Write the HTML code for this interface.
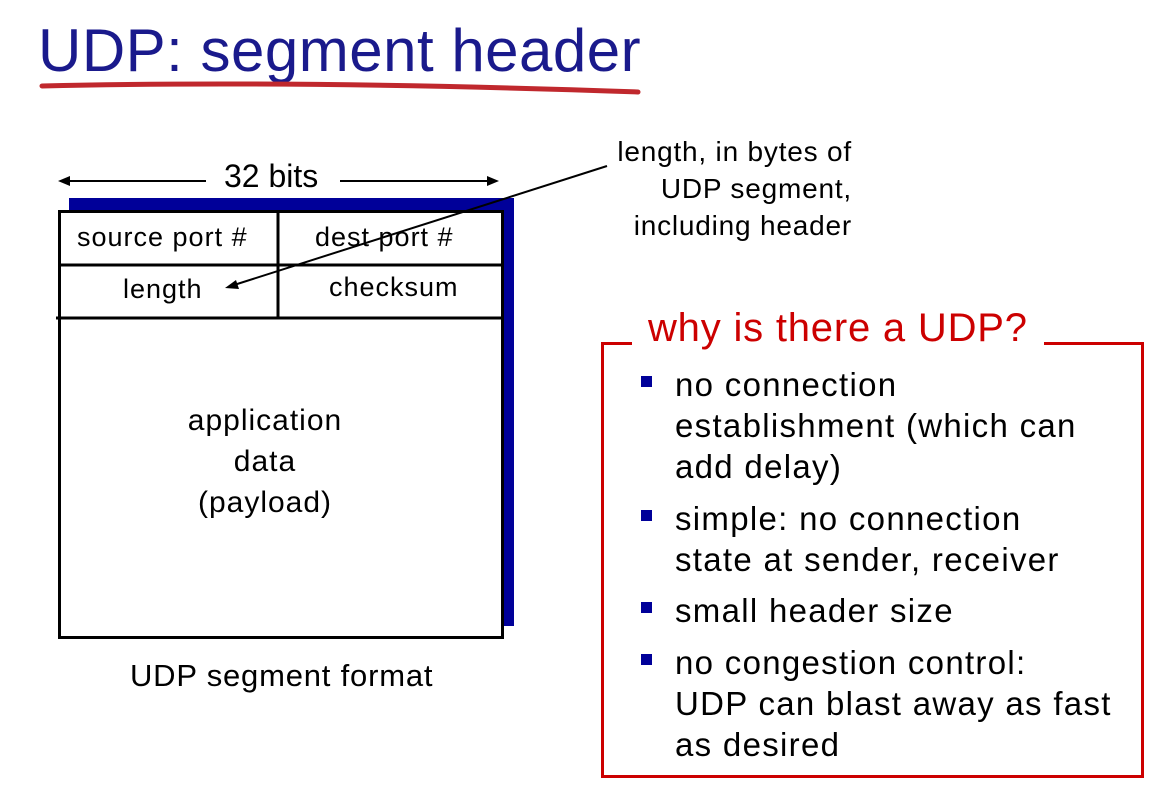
<!DOCTYPE html>
<html><head><meta charset="utf-8"><style>
body{margin:0;width:1167px;height:799px;background:#fff;position:relative;overflow:hidden;font-family:"Liberation Sans",sans-serif;color:#000}
.a{position:absolute;white-space:nowrap}
.d{font-size:27px;letter-spacing:1px}
.b{font-size:33px;line-height:41px;color:#000;letter-spacing:1.3px}
.sq{position:absolute;width:11px;height:11px;background:#000099}
</style></head><body>
<div class="a" style="left:38px;top:16px;font-size:60px;color:#1a1a8c;letter-spacing:0.5px">UDP: segment header</div>
<svg class="a" style="left:0;top:0" width="1167" height="799">
<path d="M42 86 Q300 80 638 92" stroke="#c0282d" stroke-width="5" fill="none" stroke-linecap="round"/>
<rect x="69" y="198" width="445" height="428" fill="#000099"/>
<rect x="59.5" y="211.5" width="443" height="426" fill="#fff" stroke="#000" stroke-width="3"/>
<line x1="59" y1="265" x2="503" y2="265" stroke="#000" stroke-width="3"/>
<line x1="56" y1="318" x2="501" y2="318" stroke="#000" stroke-width="3"/>
<line x1="278" y1="211" x2="278" y2="318" stroke="#000" stroke-width="3"/>
<line x1="66" y1="181" x2="206" y2="181" stroke="#000" stroke-width="2"/>
<path d="M58 181 L70 176 L70 186Z"/>
<line x1="340" y1="181" x2="490" y2="181" stroke="#000" stroke-width="2"/>
<path d="M499 181 L487 176 L487 186Z"/>
<line x1="607" y1="166" x2="234" y2="285" stroke="#000" stroke-width="2"/>
<path d="M225 288 L236 280 L239 289Z"/>
<rect x="602.5" y="343.5" width="540" height="433" fill="none" stroke="#cc0000" stroke-width="3"/>
<rect x="632" y="330" width="412" height="25" fill="#fff"/>
</svg>
<div class="a" style="left:224px;top:158px;font-size:32px">32 bits</div>
<div class="a d" style="left:77px;top:222px">source port #</div>
<div class="a d" style="left:315px;top:222px">dest port #</div>
<div class="a d" style="left:123px;top:274px">length</div>
<div class="a d" style="left:329px;top:272px">checksum</div>
<div class="a" style="left:130px;top:400px;width:270px;text-align:center;font-size:30px;letter-spacing:1px;line-height:41px;white-space:normal">application<br>data<br>(payload)</div>
<div class="a" style="left:130px;top:658px;font-size:31px;letter-spacing:0.8px">UDP segment format</div>
<div class="a" style="left:560px;top:133px;width:292px;text-align:right;font-size:28px;letter-spacing:0.8px;line-height:37px">length, in bytes of<br>UDP segment,<br>including header</div>
<div class="a" style="left:648px;top:306px;font-size:40px;letter-spacing:0.8px;color:#cc0000">why is there a UDP?</div>
<div class="sq" style="left:641px;top:376px"></div>
<div class="a b" style="left:675px;top:364px">no connection<br>establishment (which can<br>add delay)</div>
<div class="sq" style="left:641px;top:510px"></div>
<div class="a b" style="left:675px;top:498px">simple: no connection<br>state at sender, receiver</div>
<div class="sq" style="left:641px;top:602px"></div>
<div class="a b" style="left:675px;top:590px">small header size</div>
<div class="sq" style="left:641px;top:654px"></div>
<div class="a b" style="left:675px;top:642px">no congestion control:<br>UDP can blast away as fast<br>as desired</div>
</body></html>
